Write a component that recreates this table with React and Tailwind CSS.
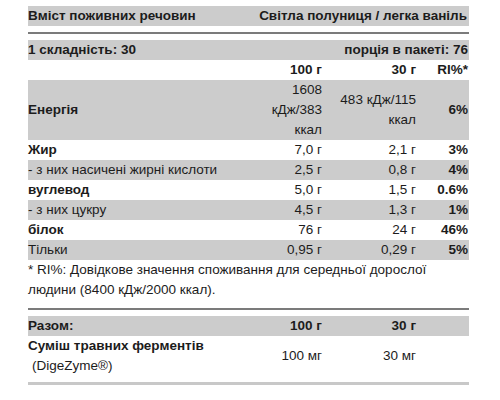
import React from 'react';

const rows = [
  { label: 'Жир', bold: true, per100: '7,0 г', perServing: '2,1 г', ri: '3%' },
  { label: '- з них насичені жирні кислоти', bold: false, per100: '2,5 г', perServing: '0,8 г', ri: '4%', shaded: true },
  { label: 'вуглевод', bold: true, per100: '5,0 г', perServing: '1,5 г', ri: '0.6%' },
  { label: '- з них цукру', bold: false, per100: '4,5 г', perServing: '1,3 г', ri: '1%', shaded: true },
  { label: 'білок', bold: true, per100: '76 г', perServing: '24 г', ri: '46%' },
  { label: 'Тільки', bold: false, per100: '0,95 г', perServing: '0,29 г', ri: '5%', shaded: true },
];

const grid = 'grid grid-cols-[237px_57px_94px_53px] items-center';

const App = () => {
  return (
    <div className="w-[500px] h-[400px] bg-white pt-[6px] pl-[28px] text-[13.5px] leading-[20px] text-[#1c1c1c] font-['Liberation_Sans',Arial,sans-serif]">
      <div className="w-[441px]">
        {/* Заголовок */}
        <div className="flex justify-between bg-[#cccccc] font-bold pr-[2px]">
          <span>Вміст поживних речовин</span>
          <span>Світла полуниця / легка ваніль</span>
        </div>
        <div className="mt-[6px] h-[2px] bg-[#7b7b7b]" />

        <div className="mt-[6px] flex justify-between bg-[#cccccc] font-bold pr-[1px]">
          <span>1 складність: 30</span>
          <span>порція в пакеті: 76</span>
        </div>

        <div className={`${grid} font-bold text-right`}>
          <span />
          <span>100 г</span>
          <span>30 г</span>
          <span className="pr-[1px]">RI%*</span>
        </div>

        <div className={`${grid} bg-[#cccccc] text-right`}>
          <span className="text-left font-bold">Енергія</span>
          <span>1608 кДж/383 ккал</span>
          <span>483 кДж/115 ккал</span>
          <span className="font-bold pr-[1px]">6%</span>
        </div>

        {rows.map((r) => (
          <div key={r.label} className={`${grid} text-right ${r.shaded ? 'bg-[#cccccc]' : ''}`}>
            <span className={`text-left ${r.bold ? 'font-bold' : ''}`}>{r.label}</span>
            <span>{r.per100}</span>
            <span>{r.perServing}</span>
            <span className="font-bold pr-[1px]">{r.ri}</span>
          </div>
        ))}

        <p className="w-[405px]">
          * RI%: Довідкове значення споживання для середньої дорослої людини (8400 кДж/2000 ккал).
        </p>
        <div className="mt-[8px] h-[2px] bg-[#7b7b7b]" />

        {/* Ферменти */}
        <div className={`${grid} mt-[6px] bg-[#cccccc] font-bold text-right`}>
          <span className="text-left">Разом:</span>
          <span>100 г</span>
          <span>30 г</span>
          <span />
        </div>
        <div className={`${grid} text-right`}>
          <div className="text-left">
            <div className="font-bold">Суміш травних ферментів</div>
            <div className="pl-[4px]">(DigeZyme®)</div>
          </div>
          <span>100 мг</span>
          <span>30 мг</span>
          <span />
        </div>
        <div className="mt-[6px] h-[3px] bg-[#c8c8c8]" />
      </div>
    </div>
  );
};

export default App;
